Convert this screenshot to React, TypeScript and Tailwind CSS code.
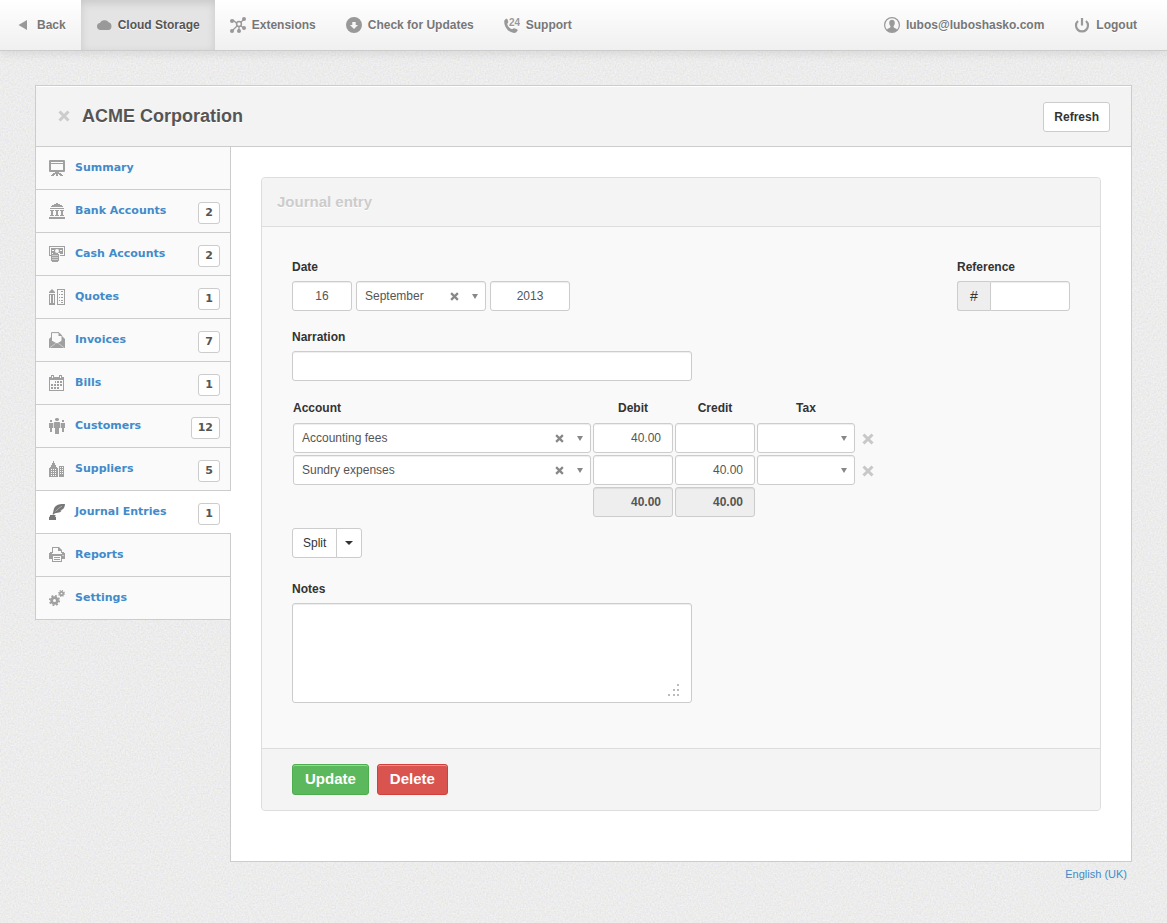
import * as React from "react";
import clsx from "clsx";

type IconProps = { className?: string; children: React.ReactNode };

function Icon({ className, children }: IconProps) {
  return (
    <svg
      viewBox="0 0 16 16"
      aria-hidden="true"
      className={clsx("h-4 w-4 shrink-0 fill-current", className)}
    >
      {children}
    </svg>
  );
}

const icons = {
  back: <path d="M12 3v10L3.500 8z" />,
  cloud: (
    <path d="M4 13a3.700 3.700 0 0 1-3-3.500A3.400 3.400 0 0 1 4 6a5 5 0 0 1 8.500-.8A4 4 0 0 1 15.500 9c0 2.500-1.300 4-3 4z" />
  ),
  extensions: (
    <>
      <path d="M3 3l5 4.500M14 2.500L8.500 7M2 14l6-6M9 14.500V8M14 11L8.500 7.500" fill="none" stroke="currentColor" strokeWidth="1.300" />
      <circle cx="2" cy="4" r="2" />
      <circle cx="14" cy="2" r="2" />
      <circle cx="2" cy="14" r="2" />
      <circle cx="9" cy="14" r="2" />
      <circle cx="14" cy="11" r="2" />
      <circle cx="9" cy="7" r="2.400" fill="#fafafa" stroke="currentColor" strokeWidth="1.500" />
    </>
  ),
  updates: (
    <path
      fillRule="evenodd"
      d="M8 0a8 8 0 1 1 0 16A8 8 0 0 1 8 0zM6.300 5v3H4l4 4 4-4H9.700V5z"
    />
  ),
  support: (
    <>
      <path d="M.3 3.500L2 1.800C2.800 1.300 3.500 2 3.800 3l.5 2c.1.800-1.200 1.300-1 2.200.5 2.200 2.200 3.800 4.200 4.800.9.400 1.700-1 2.500-.8l2.500.7c1 .4 1.500 1.100.8 2L12 15.500c-1.400.8-3.500.5-5.700-.7C2.700 12.800-.3 8 .3 3.500z" />
      <text x="5" y="8.500" fontSize="10" fontWeight="700" fontFamily="Liberation Sans, Arial, sans-serif">24</text>
    </>
  ),
  user: (
    <>
      <circle cx="8" cy="8" r="7.400" fill="none" stroke="currentColor" strokeWidth="1.200" />
      <path d="M8 2.800c2 0 2.900 1.400 2.800 3.200-.1 1.500-.7 2.500-1.200 3v1.200c.2.700 2.700 1 3.500 2.200C12 14.200 10 15 8 15s-4-.8-5.100-2.600c.8-1.200 3.300-1.500 3.500-2.200V9c-.5-.5-1.100-1.500-1.200-3C5.100 4.200 6 2.800 8 2.800z" />
    </>
  ),
  power: (
    <path d="M4 4a6 6 0 1 0 8 0M8 1v7.500" fill="none" stroke="currentColor" strokeWidth="2.200" />
  ),
  summary: (
    <path
      fillRule="evenodd"
      d="M1 0h14a1 1 0 0 1 1 1v10a1 1 0 0 1-1 1h-5v1h2v1h1v1h1v1h-3v-1h-1v-1H9v2H7v-2H6v1H5v1H2v-1h1v-1h1v-1h2v-1H1a1 1 0 0 1-1-1V1a1 1 0 0 1 1-1zM2 2v1h12V2zm0 2v6h12V4z"
    />
  ),
  bank: (
    <path d="M7 0h2v1h2v1h2v1h1v1H2V3h1V2h2V1h2zM1 5h14v1H1zM1 7h4v1H4v4h1v1H1v-1h1V8H1zM6 7h4v1H9v4h1v1H6v-1h1V8H6zM11 7h4v1h-1v4h1v1h-4v-1h1V8h-1zM0 14h16v2H0z" />
  ),
  cash: (
    <>
      <path fillRule="evenodd" d="M0 0h16v10h-5V9h4V1H1v8h1v1H0z" />
      <path fillRule="evenodd" d="M2 2h12v6h-3V7H3v1H2zM8 3a2 2 0 1 0 0 4 2 2 0 0 0 0-4zM3 4v1h2V4zm8 0v1h2V4z" />
      <path d="M4 7h5v1h1v7H9v1H3v-1H2V8h2z" />
      <path d="M3 9.500h6M3 11.500h6M3 13.500h6" stroke="#fafafa" strokeWidth=".5" />
    </>
  ),
  quotes: (
    <path
      fillRule="evenodd"
      d="M2.500 0h1v1h1v1h1v1h.5v1H0V3h.5V2h1V1h1zM0 5h6v11H0zm1 1v8h1V6zm3 0v8h1V6zM8 0h8v16H8zm1 1v14h6V1zM12 2h2v1h-2zM10 5h1v1h-1zM12 5h2v1h-2zM12 8h2v1h-2zM10 8h1v1h-1zM12 11h2v1h-2zM10 11h1v1h-1zM12 13h2v1h-2z"
    />
  ),
  invoices: (
    <>
      <path d="M0 7l2-2h12l2 2v9H0z" />
      <path d="M2.500.6H10L13 4v5l-5 3-5.500-3z" fill="#fafafa" stroke="currentColor" strokeWidth="1" />
      <path d="M9.500.5V4H13z" />
      <path d="M.5 16l6-4.500M15.500 16l-6-4.500" fill="none" stroke="#fafafa" strokeWidth=".5" />
    </>
  ),
  bills: (
    <path
      fillRule="evenodd"
      d="M2 0h3v2h5V0h3v2h2v14H0V2h2zM3 1v2h1V1zm8 0v2h1V1zM1 5v10h13V5zM6 6h1v2H6zM8 6h2v2H8zM11 6h2v2h-2zM2 9h2v2H2zM5 9h2v2H5zM8 9h2v2H8zM11 9h2v2h-2zM2 12h2v2H2zM5 12h2v2H5zM8 12h2v2H8z"
    />
  ),
  customers: (
    <path d="M7 0h2v.5h1v2H9V3H7v-.5H6v-2h1zM5.500 4h5l.8 1v5H10v6H6v-6H4.700V5zM1 2h2v2H1zM0 5h4v5H3v4H1v-4H0zM13 2h2v2h-2zM12 5h4v5h-1v4h-2v-4h-1z" />
  ),
  suppliers: (
    <path
      fillRule="evenodd"
      d="M4 0h1v2h1v2h1v2h1v1h1v9H0V7h1V6h1V4h1V2h1zM2 8v1h1V8zm2 0v1h1V8zm2 0v1h1V8zm-4 2v1h1v-1zm2 0v1h1v-1zm2 0v1h1v-1zm-4 2v1h1v-1zm2 0v1h1v-1zm2 0v1h1v-1zm-4 2v1h1v-1zm2 0v1h1v-1zm2 0v1h1v-1zM10 5h5v11h-5zm1 1v1h1V6zm2 0v1h1V6zm-2 2v1h1V8zm2 0v1h1V8zm-2 2v1h1v-1zm2 0v1h1v-1zm-2 2v1h1v-1zm2 0v1h1v-1z"
    />
  ),
  journal: (
    <>
      <path d="M16 0c-4-.2-8 .3-10.200 3C4.500 4.800 4.800 7 3.500 10.500h1.300C5.500 9.300 6.300 9 8.500 8.800c2.500-.2 3.500-1.300 4.200-2.300h-1.500l3-1.500C15.500 3.500 15.800 2 16 0z" />
      <path d="M6.500 7.500c2-2.500 4-4 6.500-5.200" fill="none" stroke="#fff" strokeWidth=".4" />
      <path d="M1 11h5.500v1H6v.500l1 .5v3H0v-3l1-.5z" />
    </>
  ),
  reports: (
    <path
      fillRule="evenodd"
      d="M3 0h7l3 3v3h-1V4H9V1H4v5H3zM1 5h2v2h10V5h2v1h1v6h-3v3H3v-3H0V6h1zm3 4v5h8V9zm1 1h6v1H5zm0 2h6v1H5zm8.500-4v1h1V8z"
    />
  ),
  settings: (
    <>
      <circle cx="5.500" cy="10.500" r="2.900" fill="none" stroke="currentColor" strokeWidth="2.800" />
      <circle cx="5.500" cy="10.500" r="4.700" fill="none" stroke="currentColor" strokeWidth="1.800" strokeDasharray="1.850 1.840" />
      <circle cx="12.500" cy="3.500" r="1.700" fill="none" stroke="currentColor" strokeWidth="1.700" />
      <circle cx="12.500" cy="3.500" r="2.900" fill="none" stroke="currentColor" strokeWidth="1.300" strokeDasharray="1.140 1.138" />
    </>
  ),
};

type IconName = keyof typeof icons;

const NAV_ITEMS: { label: string; icon: IconName; count?: number }[] = [
  { label: "Summary", icon: "summary" },
  { label: "Bank Accounts", icon: "bank", count: 2 },
  { label: "Cash Accounts", icon: "cash", count: 2 },
  { label: "Quotes", icon: "quotes", count: 1 },
  { label: "Invoices", icon: "invoices", count: 7 },
  { label: "Bills", icon: "bills", count: 1 },
  { label: "Customers", icon: "customers", count: 12 },
  { label: "Suppliers", icon: "suppliers", count: 5 },
  { label: "Journal Entries", icon: "journal", count: 1 },
  { label: "Reports", icon: "reports" },
  { label: "Settings", icon: "settings" },
];

const LINES = [
  { account: "Accounting fees", debit: "40.00", credit: "" },
  { account: "Sundry expenses", debit: "", credit: "40.00" },
];

const field =
  "h-[30px] rounded-[3px] border border-[#ccc] bg-white text-xs text-[#555] shadow-[inset_0_1px_1px_rgba(0,0,0,0.075)] outline-none focus:border-[#66afe9]";
const plainButton =
  "h-[30px] border border-[#ccc] bg-white text-xs text-[#333] hover:bg-[#ebebeb]";

function TopLink({ icon, label, active }: { icon: IconName; label: string; active?: boolean }) {
  return (
    <a
      href="#"
      className={clsx(
        "flex h-[50px] items-center gap-1.5 px-[15px] whitespace-nowrap",
        active
          ? "bg-[#e4e4e4] text-[#555] shadow-[inset_0_3px_8px_rgba(0,0,0,0.125)]"
          : "text-[#777]",
      )}
    >
      <Icon className="text-[#999]">{icons[icon]}</Icon>
      {label}
    </a>
  );
}

function Cross({ className }: { className?: string }) {
  return (
    <svg viewBox="0 0 12 12" aria-hidden="true" className={className}>
      <path d="M1.500 1.500l9 9M10.500 1.500l-9 9" fill="none" stroke="currentColor" strokeWidth="3" />
    </svg>
  );
}

function Picker({ label, value, clearable, className }: {
  label: string;
  value?: string;
  clearable?: boolean;
  className?: string;
}) {
  return (
    <div className={clsx("relative", className)}>
      <select aria-label={label} defaultValue={value} className={clsx(field, "block w-full appearance-none pr-10 pl-2 text-[#444]")}>
        <option>{value}</option>
      </select>
      {clearable && (
        <button type="button" aria-label={`Clear ${label}`} className="absolute top-[11px] right-[27px] text-[#888]">
          <Cross className="h-[9px] w-[9px]" />
        </button>
      )}
      <svg viewBox="0 0 6 5" aria-hidden="true" className="pointer-events-none absolute top-[13px] right-2 h-[5px] w-1.5 fill-[#888]">
        <path d="M0 0h6L3 5z" />
      </svg>
    </div>
  );
}

function Grain() {
  return (
    <svg aria-hidden="true" className="absolute inset-0 -z-10 h-full w-full">
      <filter id="grain" x="0" y="0" width="100%" height="100%" colorInterpolationFilters="sRGB">
        <feTurbulence type="fractalNoise" baseFrequency="0.6" numOctaves="2" seed="4" />
        <feColorMatrix values="0.08 0.05 0 0 0.860  0.05 0.08 0 0 0.860  0.05 0 0.08 0 0.860  0 0 0 0 1" />
      </filter>
      <rect width="100%" height="100%" filter="url(#grain)" />
    </svg>
  );
}

function TopBar() {
  return (
    <nav className="flex border-b border-[#ccc] bg-gradient-to-b from-white to-[#f0f0f0] text-xs font-bold shadow-[0_2px_10px_rgba(0,0,0,0.1)] [text-shadow:0_1px_0_#fff]">
      <TopLink icon="back" label="Back" />
      <TopLink icon="cloud" label="Cloud Storage" active />
      <TopLink icon="extensions" label="Extensions" />
      <TopLink icon="updates" label="Check for Updates" />
      <TopLink icon="support" label="Support" />
      <div className="mr-[15px] ml-auto flex">
        <TopLink icon="user" label="lubos@luboshasko.com" />
        <TopLink icon="power" label="Logout" />
      </div>
    </nav>
  );
}

function Sidebar({ current }: { current: string }) {
  return (
    <nav className="w-[195px] shrink-0 self-start border-l border-[#ccc]">
      {NAV_ITEMS.map((item) => {
        const active = item.label === current;
        return (
          <a
            key={item.label}
            href="#"
            className={clsx(
              "flex h-[43px] items-center gap-2.5 border-b border-[#ccc] pl-[13px] font-[DejaVu_Sans,Verdana,sans-serif] text-[11px] font-bold text-[#428bca]",
              // the open section covers the divider to the content pane
              active ? "relative -mr-px bg-white pr-[11px]" : "bg-[#fafafa] pr-2.5",
            )}
          >
            <Icon className={active ? "text-[#777]" : "text-[#a0a0a0]"}>{icons[item.icon]}</Icon>
            {item.label}
            {item.count !== undefined && (
              <span className="mt-1 ml-auto h-[22px] rounded-[3px] border border-[#ccc] bg-white px-1.5 leading-5 text-[#555]">
                {item.count}
              </span>
            )}
          </a>
        );
      })}
    </nav>
  );
}

function LinesTable() {
  const cell = "p-px";
  const heading = "p-px align-top leading-5";
  return (
    <table className="mt-4 border-collapse text-xs">
      <thead>
        <tr className="h-[25px] text-[#333]">
          <th className={clsx(heading, "w-[300px] text-left")}>Account</th>
          <th className={clsx(heading, "w-[82px]")}>Debit</th>
          <th className={clsx(heading, "w-[82px]")}>Credit</th>
          <th className={clsx(heading, "w-[100px]")}>Tax</th>
          <td />
        </tr>
      </thead>
      <tbody>
        {LINES.map((line) => (
          <tr key={line.account}>
            <td className={cell}>
              <Picker label="Account" value={line.account} clearable />
            </td>
            <td className={cell}>
              <input aria-label="Debit" defaultValue={line.debit} className={clsx(field, "block w-20 px-[11px] text-right")} />
            </td>
            <td className={cell}>
              <input aria-label="Credit" defaultValue={line.credit} className={clsx(field, "block w-20 px-[11px] text-right")} />
            </td>
            <td className={cell}>
              <Picker label="Tax" />
            </td>
            <td className="pt-0.5 pl-1.5">
              <button type="button" aria-label="Remove line" className="block text-[#c8c8c8] hover:text-[#999]">
                <Cross className="h-3 w-3" />
              </button>
            </td>
          </tr>
        ))}
        <tr>
          <td />
          {["Total debit", "Total credit"].map((label) => (
            <td key={label} className={cell}>
              <input
                aria-label={label}
                readOnly
                value="40.00"
                className="block h-[30px] w-20 rounded-[3px] border border-[#ccc] bg-[#eee] px-[11px] text-right font-bold text-[#555] shadow-[inset_0_1px_1px_rgba(0,0,0,0.075)]"
              />
            </td>
          ))}
        </tr>
      </tbody>
    </table>
  );
}

function JournalEntryForm() {
  const label = "mb-1 block text-xs leading-5 font-bold text-[#333]";
  return (
    <form className="rounded border border-[#ddd] bg-[#f9f9f9]" onSubmit={(event) => event.preventDefault()}>
      <h2 className="rounded-t border-b border-[#ddd] bg-[#f4f4f4] px-[15px] text-[15px] leading-[48px] font-bold text-[#ccc] [text-shadow:0_1px_0_#fff]">
        Journal entry
      </h2>
      <div className="px-[30px] pt-[30px] pb-[45px]">
        <div className="flex justify-between">
          <div>
            <label htmlFor="day" className={label}>Date</label>
            <div className="flex gap-1">
              <input id="day" defaultValue="16" className={clsx(field, "w-[60px] text-center")} />
              <Picker label="Month" value="September" clearable className="w-[130px]" />
              <input aria-label="Year" defaultValue="2013" className={clsx(field, "w-20 text-center")} />
            </div>
          </div>
          <div>
            <label htmlFor="reference" className={label}>Reference</label>
            <div className="flex">
              <span className="flex h-[30px] w-[33px] items-center justify-center rounded-l-[3px] border border-r-0 border-[#ccc] bg-[#eee] text-sm text-[#333]">
                #
              </span>
              <input id="reference" className={clsx(field, "w-20 rounded-l-none px-2")} />
            </div>
          </div>
        </div>
        <div className="mt-4">
          <label htmlFor="narration" className={label}>Narration</label>
          <input id="narration" className={clsx(field, "block w-full max-w-[400px] px-2")} />
        </div>
        <LinesTable />
        <div className="mt-2.5 flex">
          <button type="button" className={clsx(plainButton, "rounded-l-[3px] px-2.5")}>Split</button>
          <button type="button" aria-label="Split options" className={clsx(plainButton, "-ml-px rounded-r-[3px] px-2")}>
            <svg viewBox="0 0 8 4" aria-hidden="true" className="h-1 w-2 fill-[#333]">
              <path d="M0 0h8L4 4z" />
            </svg>
          </button>
        </div>
        <div className="mt-[21px]">
          <label htmlFor="notes" className={label}>Notes</label>
          <div className="relative max-w-[400px]">
            <textarea id="notes" className={clsx(field, "block h-[100px] w-full resize-none p-2")} />
            <svg viewBox="0 0 12 12" aria-hidden="true" className="pointer-events-none absolute right-3 bottom-[7px] h-3 w-3 fill-[#bbb]">
              <path d="M9 0h2v2H9zM5 5h2v2H5zM9 5h2v2H9zM0 10h2v2H0zM5 10h2v2H5zM9 10h2v2H9z" />
            </svg>
          </div>
        </div>
      </div>
      <div className="flex gap-2 rounded-b border-t border-[#ddd] bg-[#f4f4f4] px-[30px] py-[15px] text-[15px] font-bold text-white">
        <button type="submit" className="h-[31px] rounded-[3px] border border-[#4cae4c] bg-[#5cb85c] px-3 shadow-[inset_0_1px_0_rgba(255,255,255,0.4)]">
          Update
        </button>
        <button type="button" className="h-[31px] rounded-[3px] border border-[#d43f3a] bg-[#d9534f] px-3 shadow-[inset_0_1px_0_rgba(255,255,255,0.4)]">
          Delete
        </button>
      </div>
    </form>
  );
}

export default function App() {
  return (
    <div className="relative isolate min-h-screen bg-[#ebebeb] font-[Liberation_Sans,Arial,sans-serif]">
      <Grain />
      <TopBar />
      <div className="mx-[35px] mt-[34px]">
        <header className="flex items-start border border-[#ccc] bg-[#f3f3f3] pt-4 pr-[21px] pb-3.5 pl-[22px] shadow-[inset_0_1px_0_#fff]">
          <button type="button" aria-label="Close business" className="mt-2 text-[#ccc] hover:text-[#999]">
            <Cross className="h-3 w-3" />
          </button>
          <h1 className="ml-3 text-lg leading-7 font-bold text-[#555] [text-shadow:0_1px_0_#fff]">ACME Corporation</h1>
          <button type="button" className={clsx(plainButton, "ml-auto rounded-[3px] px-2.5 font-bold")}>Refresh</button>
        </header>
        <div className="flex">
          <Sidebar current="Journal Entries" />
          <main className="min-w-0 flex-1 border border-t-0 border-[#ccc] bg-white px-[30px] pt-[30px] pb-[50px]">
            <JournalEntryForm />
          </main>
        </div>
        <footer className="pt-1 pr-[5px] text-right text-[11px] leading-4">
          <a href="#" className="text-[#428bca] hover:underline">English (UK)</a>
        </footer>
      </div>
    </div>
  );
}
